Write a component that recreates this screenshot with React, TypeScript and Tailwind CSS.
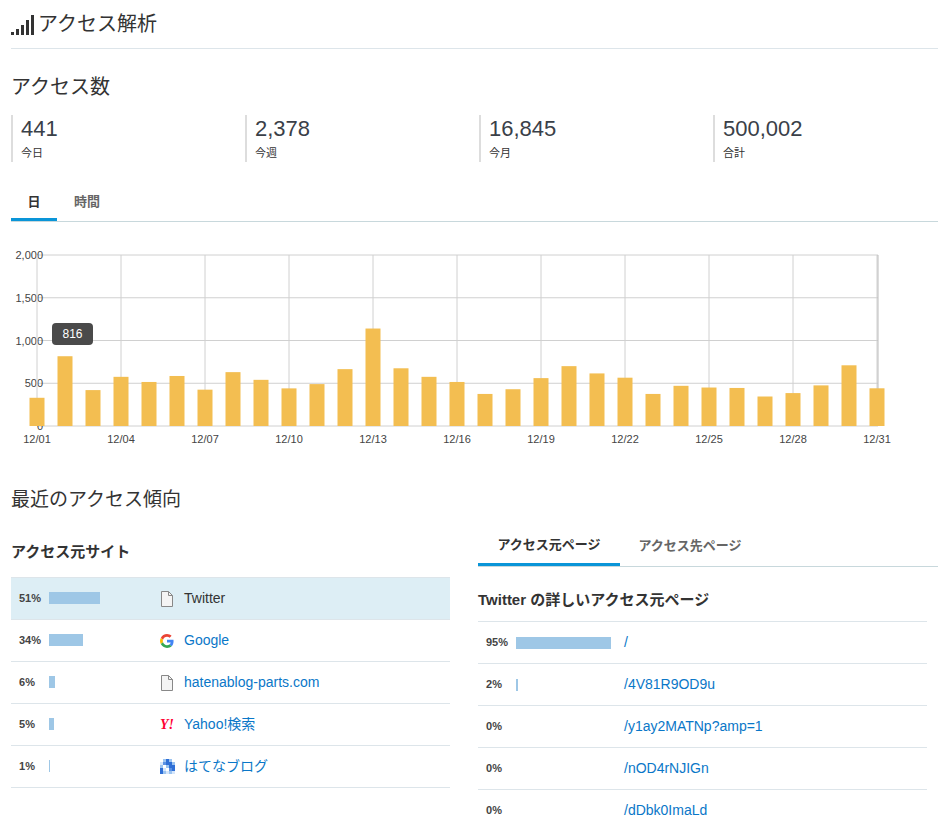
import React from "react";

const vals=[330,816,420,575,515,585,425,630,540,440,490,665,1140,675,575,515,375,430,560,700,615,565,375,470,450,445,345,385,475,710,441];
const labels=["12/01","12/04","12/07","12/10","12/13","12/16","12/19","12/22","12/25","12/28","12/31"];

function Chart(){
  const x0=37,dx=28,y0=424,h=171;
  const y=(v:number)=>y0-v*h/2000;
  return (
    <svg width="938" height="215" viewBox="0 235 938 215" className="block">
      {[0,500,1000,1500,2000].map(v=>(
        <g key={v}>
          <line x1={x0} x2={878} y1={y(v)} y2={y(v)} stroke="#d0d0d0" />
          <text x={x0+6} y={y(v)+4} textAnchor="end" fontSize="11" fill="#444" fontFamily="Liberation Sans, sans-serif">{v===0?"0":v.toLocaleString("en-US")}</text>
        </g>
      ))}
      {labels.map((l,i)=>(
        <g key={l}>
          <line x1={x0+84*i} x2={x0+84*i} y1={y(2000)} y2={y0} stroke="#d0d0d0"/>
          <text x={x0+84*i} y={441} textAnchor="middle" fontSize="11" fill="#444" fontFamily="Liberation Sans, sans-serif">{l}</text>
        </g>
      ))}
      <line x1={878} x2={878} y1={y(2000)} y2={y0} stroke="#bbb"/>
      {vals.map((v,i)=>(
        <rect key={i} x={x0+dx*i-7.5} y={y(v)} width={15} height={y0-y(v)} fill="#f3be51" />
      ))}
      <rect x={52} y={321} width={41} height={22} rx={4} fill="#4a4a4a"/>
      <text x={72.5} y={336} textAnchor="middle" fontSize="12" fill="#fff" fontFamily="Liberation Sans, sans-serif">816</text>
    </svg>
  );
}

const DocIcon=()=>(
  <svg width="14" height="16" viewBox="0 0 14 16"><path d="M1.5 .5h7l4 4v11h-11z" fill="#f4f4f4" stroke="#888"/><path d="M8.5 .5v4h4" fill="none" stroke="#888"/></svg>
);
const GIcon=()=>(
  <svg width="14" height="14" viewBox="0 0 48 48"><path fill="#EA4335" d="M24 9.5c3.5 0 6.6 1.2 9 3.5l6.7-6.7C35.6 2.4 30.2 0 24 0 14.6 0 6.6 5.4 2.7 13.3l7.8 6C12.4 13.7 17.7 9.5 24 9.5z"/><path fill="#4285F4" d="M46.5 24.5c0-1.6-.1-3.1-.4-4.5H24v9h12.7c-.6 3-2.3 5.5-4.8 7.2l7.6 5.9c4.4-4.1 7-10.1 7-17.6z"/><path fill="#FBBC05" d="M10.5 28.7c-.5-1.5-.8-3-.8-4.7s.3-3.2.8-4.7l-7.8-6C1 16.6 0 20.2 0 24s1 7.4 2.7 10.7l7.8-6z"/><path fill="#34A853" d="M24 48c6.5 0 11.9-2.1 15.9-5.8l-7.6-5.9c-2.1 1.4-4.9 2.3-8.3 2.3-6.3 0-11.6-4.2-13.5-9.9l-7.8 6C6.6 42.6 14.6 48 24 48z"/></svg>
);
const YIcon=()=>(<span className="text-[14px] font-bold text-[#ff0033] italic leading-none" style={{fontFamily:"Liberation Serif, serif"}}>Y!</span>);
const HIcon=()=>(
  <svg width="15" height="15" viewBox="0 0 15 15">
    {[[3,0,"#9cc4f0"],[6,0,"#2f6fd6"],[9,0,"#9cc4f0"],[0,3,"#d6e6fa"],[3,3,"#5a92e4"],[6,3,"#2f6fd6"],[9,3,"#2f6fd6"],[12,3,"#9cc4f0"],[0,6,"#9cc4f0"],[6,6,"#9cc4f0"],[9,6,"#2f6fd6"],[12,6,"#2f6fd6"],[0,9,"#2f6fd6"],[3,9,"#d6e6fa"],[9,9,"#5a92e4"],[12,9,"#2f6fd6"],[0,12,"#2f6fd6"],[3,12,"#9cc4f0"],[6,12,"#d6e6fa"],[9,12,"#9cc4f0"],[12,12,"#d6e6fa"]].map(([x,y,c],i)=>(
      <rect key={i} x={x as number} y={y as number} width="3" height="3" fill={c as string}/>
    ))}
  </svg>
);

const sites=[
  {p:51,w:51,name:"Twitter",icon:<DocIcon/>,sel:true},
  {p:34,w:34,name:"Google",icon:<GIcon/>},
  {p:6,w:6,name:"hatenablog-parts.com",icon:<DocIcon/>},
  {p:5,w:5,name:"Yahoo!検索",icon:<YIcon/>},
  {p:1,w:1,name:"はてなブログ",icon:<HIcon/>},
];
const pages=[
  {p:95,w:95,path:"/"},
  {p:2,w:2,path:"/4V81R9OD9u"},
  {p:0,w:0,path:"/y1ay2MATNp?amp=1"},
  {p:0,w:0,path:"/nOD4rNJIGn"},
  {p:0,w:0,path:"/dDbk0ImaLd"},
];

export default function App(){
  return (
    <div className="w-[938px] h-[826px] overflow-hidden bg-white text-[#333]" style={{fontFamily:"'Liberation Sans','Noto Sans CJK JP',sans-serif"}}>
      <div className="ml-[11px] flex items-center gap-[3px] h-[49px] border-b border-[#dde5ea]">
        <svg width="24" height="24" viewBox="0 0 24 24" className="mt-[2px]"><rect x="0" y="19" width="3" height="3" fill="#333"/><rect x="5" y="16" width="3" height="6" fill="#333"/><rect x="10" y="12" width="3" height="10" fill="#333"/><rect x="15" y="7" width="3" height="15" fill="#333"/><rect x="20" y="2" width="3" height="20" fill="#333"/></svg>
        <span className="text-[20px] text-[#333]">アクセス解析</span>
      </div>
      <div className="pl-[11px]">
        <h2 className="mt-[26px] text-[20px] leading-[24px]">アクセス数</h2>
        <div className="mt-[16px] grid grid-cols-[234px_234px_234px_1fr]">
          {[["441","今日"],["2,378","今週"],["16,845","今月"],["500,002","合計"]].map(([n,l])=>(
            <div key={l} className="border-l-2 border-[#ddd] pl-[8px] h-[47px]">
              <div className="text-[22px] leading-[28px] text-[#3a4048]">{n}</div>
              <div className="text-[11px] leading-[16px] mt-[2px]">{l}</div>
            </div>
          ))}
        </div>
        <div className="mt-[30px] flex border-b border-[#c8d8dc] h-[30px] text-[13px] font-bold">
          <div className="w-[46px] text-center border-b-[3px] border-[#0a95d8] text-[#333]">日</div>
          <div className="w-[60px] text-center text-[#666]">時間</div>
        </div>
      </div>
      <div className="mt-[15px]"><Chart/></div>
      <div className="pl-[11px]">
        <h2 className="mt-[36px] text-[19px] leading-[24px]">最近のアクセス傾向</h2>
        <div className="mt-[14px] flex gap-[28px]">
          <div className="w-[439px] shrink-0">
            <div className="h-[45px] flex items-center text-[15px] font-bold pt-[8px]">アクセス元サイト</div>
            <div className="mt-[6px] border-t border-[#dde5ea]">
              {sites.map(s=>(
                <div key={s.name} className={`h-[42px] flex items-center border-b border-[#dde5ea] ${s.sel?"bg-[#ddeef5]":""}`}>
                  <span className="w-[38px] pl-[8px] text-[11px] font-bold text-[#444]">{s.p}%</span>
                  <span className="w-[111px] flex"><span className="h-[12px] bg-[#9ec7e6] mb-[2px]" style={{width:Math.max(s.w,1)}}/></span>
                  <span className="w-[24px] flex items-center">{s.icon}</span>
                  <span className={`text-[14px] ${s.sel?"text-[#333]":"text-[#0a77c8]"}`}>{s.name}</span>
                </div>
              ))}
            </div>
          </div>
          <div className="flex-1">
            <div className="flex border-b border-[#c8d8dc] h-[41px] text-[13px] font-bold items-end">
              <div className="w-[142px] h-full flex items-center justify-center border-b-[3px] border-[#0a95d8] text-[#333]">アクセス元ページ</div>
              <div className="w-[140px] h-full flex items-center justify-center text-[#666]">アクセス先ページ</div>
            </div>
            <div className="h-[54px] flex items-center pt-[12px] text-[15px] font-bold">Twitter の詳しいアクセス元ページ</div>
            <div className="border-t border-[#dde5ea] mr-[11px]">
              {pages.map(p=>(
                <div key={p.path} className="h-[42px] flex items-center border-b border-[#dde5ea]">
                  <span className="w-[38px] pl-[8px] text-[11px] font-bold text-[#444]">{p.p}%</span>
                  <span className="w-[108px] flex">{p.w>0&&<span className="h-[12px] bg-[#9ec7e6]" style={{width:p.w}}/>}</span>
                  <span className="text-[14px] text-[#0a77c8]">{p.path}</span>
                </div>
              ))}
            </div>
          </div>
        </div>
      </div>
    </div>
  );
}
